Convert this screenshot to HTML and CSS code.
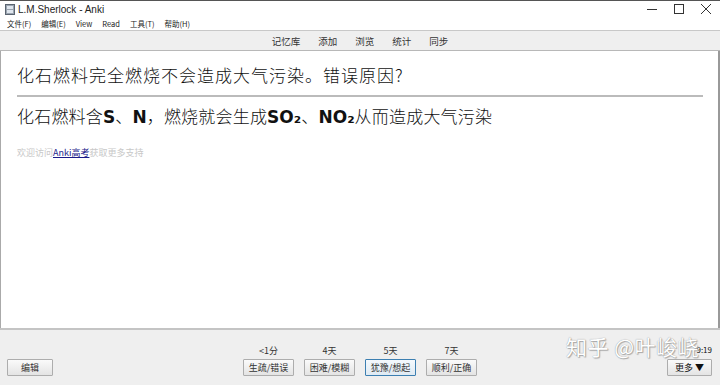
FILE: index.html
```html
<!DOCTYPE html>
<html lang="zh">
<head>
    <meta charset="UTF-8">
    <meta name="viewport" content="width=device-width, initial-scale=1.0">
    <title>L.M.Sherlock - Anki</title>
    <link rel="stylesheet" href="styles.css">
</head>
<body>
    <div class="window">
        <!-- judul jendela -->
        <div class="titlebar">
            <svg class="app-icon" width="10" height="11" viewBox="0 0 10 11">
                <rect x="0.5" y="0.5" width="9" height="10" fill="#9aa4b0" stroke="#5a6470"/>
                <rect x="2" y="2" width="6" height="3" fill="#dfe6ee"/>
                <rect x="2" y="6" width="6" height="3" fill="#dfe6ee"/>
            </svg>
            <span class="title">L.M.Sherlock - Anki</span>
            <div class="controls">
                <svg width="10" height="10" viewBox="0 0 10 10"><line x1="0" y1="5.5" x2="10" y2="5.5" stroke="#333" stroke-width="1"/></svg>
                <svg width="10" height="10" viewBox="0 0 10 10"><rect x="0.5" y="0.5" width="9" height="9" fill="none" stroke="#333" stroke-width="1"/></svg>
                <svg width="10" height="10" viewBox="0 0 10 10"><path d="M0 0 L10 10 M10 0 L0 10" stroke="#333" stroke-width="1"/></svg>
            </div>
        </div>

        <div class="menubar">
            <span>文件(F)</span>
            <span>编辑(E)</span>
            <span>View</span>
            <span>Read</span>
            <span>工具(T)</span>
            <span>帮助(H)</span>
        </div>

        <div class="toolbar">
            <span>记忆库</span>
            <span>添加</span>
            <span>浏览</span>
            <span>统计</span>
            <span>同步</span>
        </div>

        <!-- isi kartu -->
        <div class="card">
            <div class="question">化石燃料完全燃烧不会造成大气污染。错误原因?</div>
            <hr class="answer-line">
            <div class="answer">化石燃料含<b>S</b>、<b>N</b>，燃烧就会生成<b>SO₂</b>、<b>NO₂</b>从而造成大气污染</div>
            <div class="promo">欢迎访问<a href="#">Anki高考</a>获取更多支持</div>
        </div>

        <div class="bottombar">
            <button class="btn edit-btn">编辑</button>
            <div class="answers">
                <div class="ease">
                    <span class="due">&lt;1分</span>
                    <button class="btn">生疏/错误</button>
                </div>
                <div class="ease">
                    <span class="due">4天</span>
                    <button class="btn">困难/模糊</button>
                </div>
                <div class="ease">
                    <span class="due">5天</span>
                    <button class="btn focus">犹豫/想起</button>
                </div>
                <div class="ease">
                    <span class="due">7天</span>
                    <button class="btn">顺利/正确</button>
                </div>
            </div>
            <div class="right-side">
                <span class="clock">9:19</span>
                <button class="btn more-btn">更多 ▼</button>
            </div>
            <div class="watermark">知乎 @叶峻峣</div>
        </div>
    </div>
</body>
</html>
```
FILE: styles.css
```css
body {
    margin: 0;
    font-family: "Noto Sans CJK SC", "DejaVu Sans", sans-serif;
    background-color: #fff;
}
.window {
    width: 720px;
    height: 385px;
    display: flex;
    flex-direction: column;
    box-sizing: border-box;
    border-top: 1px solid #555;
    overflow: hidden;
}
.titlebar {
    height: 16px;
    display: flex;
    align-items: center;
    padding-left: 5px;
    font-size: 10px;
    color: #222;
}
.app-icon {
    margin-right: 3px;
}
.title {
    font-family: "Liberation Sans", "Noto Sans CJK SC", sans-serif;
}
.controls {
    margin-left: auto;
    display: flex;
    gap: 17px;
    padding-right: 9px;
}
.menubar {
    height: 13px;
    display: flex;
    align-items: center;
    padding-left: 7px;
    gap: 10px;
    font-size: 7.5px;
    color: #222;
}
.toolbar {
    height: 19px;
    background-color: #efefef;
    border-top: 1px solid #c8c8c8;
    border-bottom: 1px solid #b8b8b8;
    display: flex;
    align-items: center;
    justify-content: center;
    gap: 18px;
    font-size: 9.5px;
    color: #333;
}
.card {
    flex: 1;
    border-left: 1px solid #aaa;
    border-right: 2px solid #999;
    padding: 11px 15px 0 16px;
}
.question {
    font-size: 17px;
    font-weight: 300;
    color: #111;
    letter-spacing: 1px;
    line-height: 26px;
}
.answer-line {
    border: none;
    border-top: 2px solid #bbb;
    margin: 7px 0 6px 0;
}
.answer {
    font-size: 17px;
    font-weight: 300;
    color: #111;
    letter-spacing: 0.2px;
    line-height: 26px;
}
.answer b {
    font-family: "DejaVu Sans", sans-serif;
    font-weight: bold;
    letter-spacing: 0;
}
.promo {
    margin-top: 16px;
    font-size: 9px;
    color: #c8c8c8;
}
.promo a {
    color: #1a1a8a;
    text-decoration: underline;
}
.bottombar {
    position: relative;
    height: 46px;
    background-color: #efefef;
    border-top: 2px solid #c4c4c4;
    display: flex;
    align-items: flex-end;
    padding: 0 8px 9px 7px;
}
.btn {
    font-family: "Noto Sans CJK SC", sans-serif;
    font-size: 9px;
    color: #333;
    background: linear-gradient(#fafafa, #e4e4e4);
    border: 1px solid #adadad;
    border-radius: 1px;
    height: 17px;
    padding: 0;
    line-height: 15px;
}
.edit-btn {
    width: 46px;
}
.answers {
    display: flex;
    gap: 10px;
    margin-left: 190px;
}
.ease {
    display: flex;
    flex-direction: column;
    align-items: center;
    gap: 2px;
}
.due {
    font-size: 9px;
    color: #333;
    line-height: 12px;
}
.ease .btn {
    width: 51px;
}
.btn.focus {
    border: 1px solid #3c7fb1;
    background: linear-gradient(#f4f9fd, #dfeaf3);
}
.right-side {
    margin-left: auto;
    display: flex;
    flex-direction: column;
    align-items: flex-end;
}
.clock {
    font-size: 8px;
    color: #111;
    line-height: 10px;
    margin-bottom: 4px;
}
.more-btn {
    width: 45px;
    color: #111;
}
.watermark {
    position: absolute;
    left: 566px;
    top: 4px;
    font-size: 21px;
    line-height: 24px;
    color: #fff;
    text-shadow: 0 0 1px #888, 1px 1px 1px #aaa;
    letter-spacing: 0.5px;
    pointer-events: none;
}
```
